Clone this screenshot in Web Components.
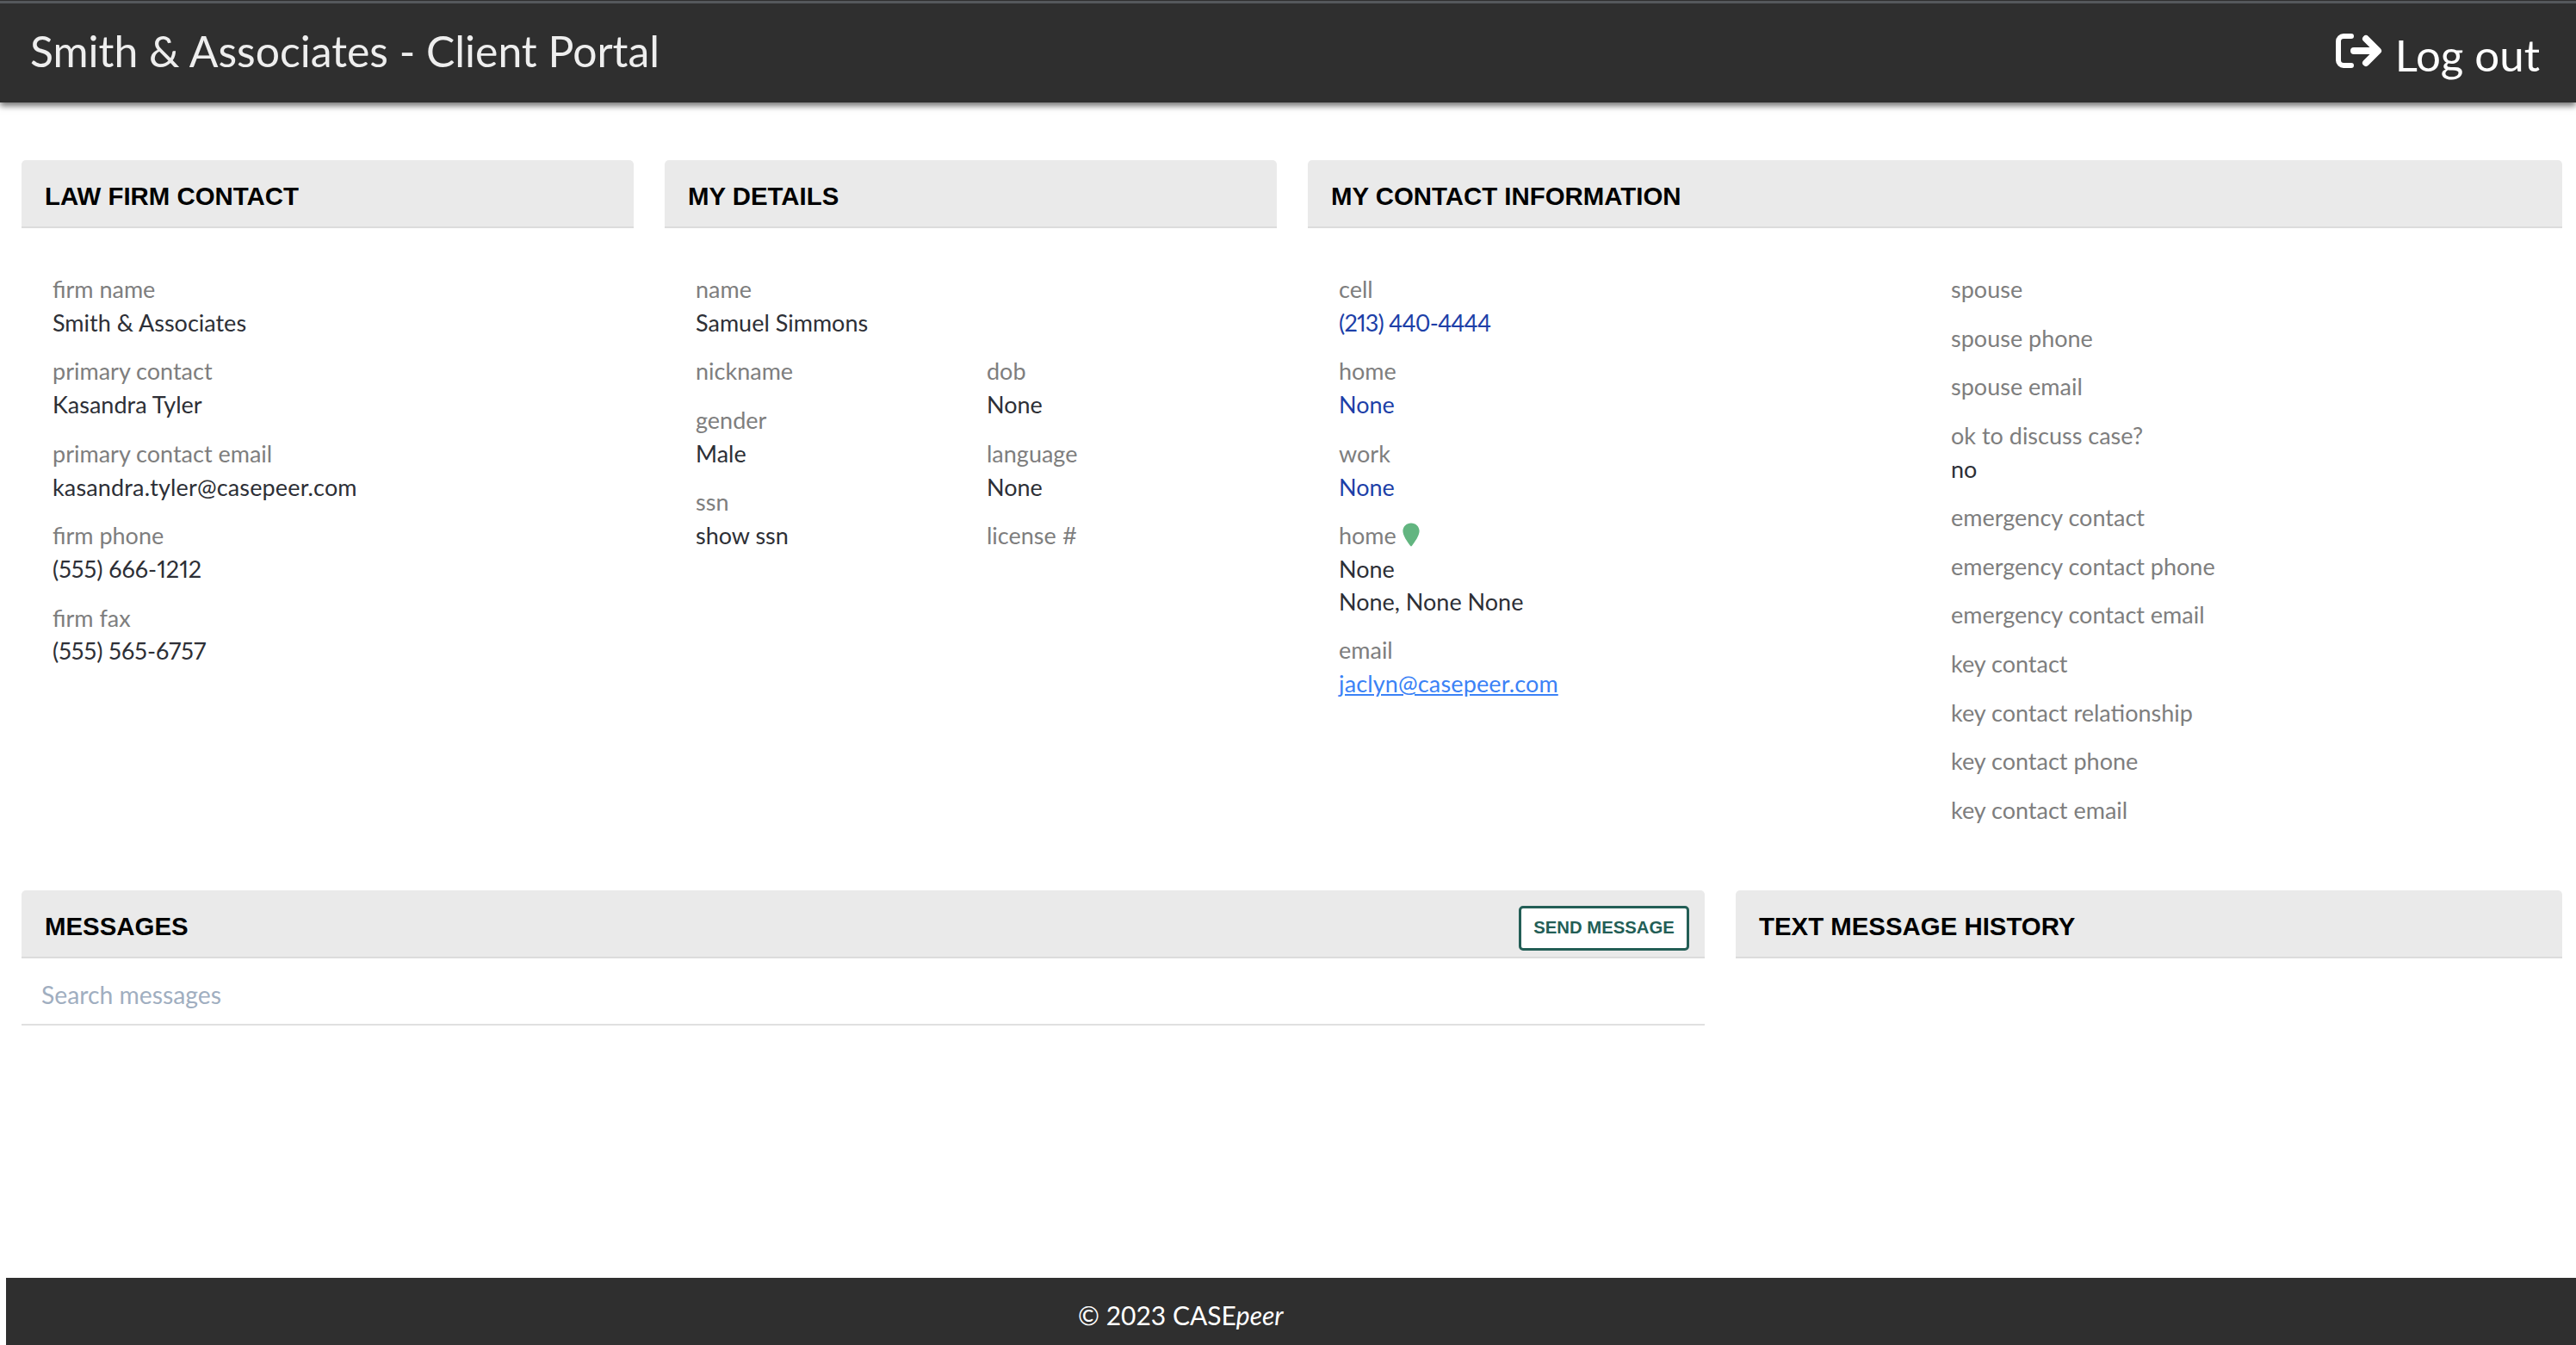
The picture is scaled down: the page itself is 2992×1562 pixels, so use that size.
<!doctype html>
<html lang="en"><head><meta charset="utf-8"><title>Client Portal</title>
<style>
html,body{margin:0;height:100%;background:#fff}
body{font-family:"Lato","Liberation Sans",sans-serif;display:flex;flex-direction:column;min-height:1562px;height:1562px;overflow:hidden}
</style></head><body>
<portal-header title-text="Smith &amp; Associates - Client Portal"></portal-header>
<portal-main>
  <top-row>
    <info-panel heading="LAW FIRM CONTACT">
      <field-col>
        <info-field label="firm name">Smith &amp; Associates</info-field>
        <info-field label="primary contact">Kasandra Tyler</info-field>
        <info-field label="primary contact email" spread>kasandra.tyler@casepeer.com</info-field>
        <info-field label="firm phone">(555) 666-1212</info-field>
        <info-field label="firm fax">(555) 565-6757</info-field>
      </field-col>
    </info-panel>
    <info-panel heading="MY DETAILS">
      <field-col>
        <info-field label="name">Samuel Simmons</info-field>
        <two-cols first="338px">
          <field-col slot="a">
            <info-field label="nickname"></info-field>
            <info-field label="gender">Male</info-field>
            <info-field label="ssn">show ssn</info-field>
          </field-col>
          <field-col slot="b">
            <info-field label="dob">None</info-field>
            <info-field label="language">None</info-field>
            <info-field label="license #"></info-field>
          </field-col>
        </two-cols>
      </field-col>
    </info-panel>
    <info-panel heading="MY CONTACT INFORMATION">
      <two-cols first="711px">
        <field-col slot="a">
          <info-field label="cell" tone="phone" tight>(213) 440-4444</info-field>
          <info-field label="home" tone="phone">None</info-field>
          <info-field label="work" tone="phone">None</info-field>
          <info-field label="home" pin>None<br>None, None None</info-field>
          <info-field label="email" tone="link" spread>jaclyn@casepeer.com</info-field>
        </field-col>
        <field-col slot="b">
          <info-field label="spouse"></info-field>
          <info-field label="spouse phone"></info-field>
          <info-field label="spouse email"></info-field>
          <info-field label="ok to discuss case?">no</info-field>
          <info-field label="emergency contact"></info-field>
          <info-field label="emergency contact phone"></info-field>
          <info-field label="emergency contact email"></info-field>
          <info-field label="key contact"></info-field>
          <info-field label="key contact relationship"></info-field>
          <info-field label="key contact phone"></info-field>
          <info-field label="key contact email"></info-field>
        </field-col>
      </two-cols>
    </info-panel>
  </top-row>
  <bottom-row>
    <info-panel heading="MESSAGES" flush>
      <send-button slot="action">SEND MESSAGE</send-button>
      <search-line>Search messages</search-line>
    </info-panel>
    <info-panel heading="TEXT MESSAGE HISTORY" flush></info-panel>
  </bottom-row>
</portal-main>
<portal-footer>© 2023 CASE<em>peer</em></portal-footer>
<script>
function def(name, html, setup){
  customElements.define(name, class extends HTMLElement{
    constructor(){super();this.attachShadow({mode:"open"}).innerHTML=html;}
    connectedCallback(){ if(setup) setup(this, this.shadowRoot); }
  });
}
const FONT='"Lato","Liberation Sans",sans-serif';
def("portal-header",`<style>
:host{display:flex;flex:none;align-items:center;justify-content:space-between;box-sizing:border-box;height:119px;background:#2f2f2f;box-shadow:0 4px 7px rgba(0,0,0,.55);position:relative;z-index:1;padding:0 42px 0 35px;color:#eee;font-family:${FONT}}
:host::before{content:"";position:absolute;left:0;right:0;top:1px;height:3px;background:#55585c}
h1{margin:-2px 0 0;font-weight:400;font-size:49.900px;line-height:60px;white-space:nowrap}
a{display:flex;align-items:center;gap:15px;color:#fff;font-size:51px;line-height:64px;text-decoration:none;white-space:nowrap;margin-top:8px}
svg{width:54px;height:40px;margin-top:-9px;display:block}
</style><h1></h1><a href="#"><svg viewBox="0 0 54 40" fill="none" stroke="#fff" stroke-linecap="round" stroke-linejoin="round"><path stroke-width="6" d="M18 3H9a6 6 0 0 0-6 6v22a6 6 0 0 0 6 6h9"/><path stroke-width="8" d="M21 20H48M35 6l14 14-14 14"/></svg><span>Log out</span></a>`,
(el,s)=>{s.querySelector("h1").textContent=el.getAttribute("title-text");});
def("portal-main",`<style>:host{display:flex;flex-direction:column;flex:1;padding:67px 16px 0 25px;min-height:0}</style><slot></slot>`);
def("top-row",`<style>:host{display:grid;grid-template-columns:711px 711px 1fr;gap:36px;height:848px}</style><slot></slot>`);
def("bottom-row",`<style>:host{display:grid;grid-template-columns:1955px 1fr;gap:36px}</style><slot></slot>`);
def("info-panel",`<style>
:host{display:block;min-width:0;font-family:${FONT}}
header{display:flex;align-items:center;justify-content:space-between;box-sizing:border-box;height:79px;background:#eaeaea;border-bottom:2px solid #dcdcdc;border-radius:5px 5px 0 0;padding:6px 18px 0 27px}
h2{margin:0;font:700 29.400px/38px "Liberation Sans",Arial,sans-serif;color:#000;white-space:nowrap}
.body{padding:52px 0 0 36px}
:host([flush]) .body{padding:0}
</style><header><h2></h2><slot name="action"></slot></header><div class="body"><slot></slot></div>`,
(el,s)=>{s.querySelector("h2").textContent=el.getAttribute("heading");});
def("field-col",`<style>:host{display:flex;flex-direction:column;min-width:0}</style><slot></slot>`);
def("two-cols",`<style>:host{display:grid;grid-template-columns:var(--first) 1fr}</style><slot name="a"></slot><slot name="b"></slot>`,
(el)=>{el.style.setProperty("--first",el.getAttribute("first"));});
def("info-field",`<style>
:host{display:block;font-size:27px;line-height:37.8px;margin-bottom:18.8px;color:#2d2f36;font-family:${FONT};white-space:nowrap;font-variant-numeric:proportional-nums}
.l{display:flex;align-items:center;gap:7px;color:#7e7e7e}
.v{line-height:37.8px}
.v:not(:empty){margin-top:0}
:host([has-value]) .v{padding-top:1px}
:host([tone=phone]) .v{color:#1d3fa8}
:host([tone=link]) .v{color:#3b82f6;text-decoration:underline}
:host([tight]) .v{letter-spacing:-.8px}
:host([spread]) .v{letter-spacing:.15px}
svg{display:none;width:20px;height:28px;margin-top:-3px}
:host([pin]) svg{display:block}
</style><div class="l"><span></span><svg viewBox="0 0 20 28"><path fill="#62b580" d="M10 .5C4.6.5.4 4.6.4 9.8c0 5.4 5.4 12.6 8.6 17a1.2 1.2 0 0 0 2 0c3.2-4.4 8.6-11.6 8.6-17C19.600 4.600 15.400.5 10 .5z"/></svg></div><div class="v"><slot></slot></div>`,
(el,s)=>{s.querySelector("span").textContent=el.getAttribute("label");
  if(el.childNodes.length) el.setAttribute("has-value","");});
def("send-button",`<style>
:host{display:inline-flex;align-items:center;justify-content:center;box-sizing:border-box;width:198px;height:52px;position:relative;top:2px;background:#fff;border:3px solid #235e56;border-radius:5px;color:#235e56;font:700 20.300px/1 "Liberation Sans",Arial,sans-serif;white-space:nowrap}
</style><slot></slot>`);
def("search-line",`<style>
:host{display:block;box-sizing:border-box;height:78px;line-height:72px;padding:6px 0 0 23px;border-bottom:2px solid #e0e0e0;color:#a0aec0;font-size:28.300px;font-family:${FONT}}
</style><slot></slot>`);
def("portal-footer",`<style>
:host{display:block;flex:none;box-sizing:border-box;height:78px;margin-left:7px;background:#2f2f2f;color:#fff;font-size:30px;line-height:86px;padding-left:1245px;font-family:${FONT};white-space:nowrap}
</style><slot></slot>`);
</script>
</body></html>
